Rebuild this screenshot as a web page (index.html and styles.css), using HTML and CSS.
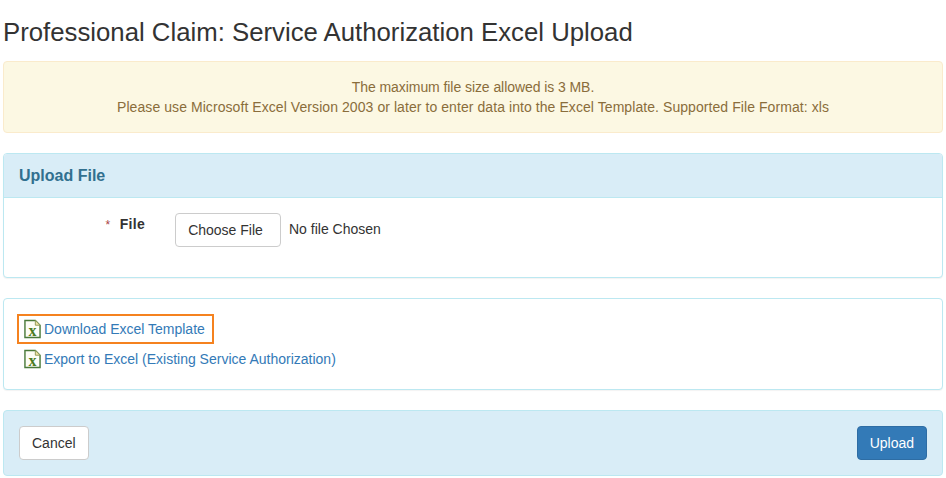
FILE: index.html
```html
<!DOCTYPE html>
<html lang="en">
<head>
  <meta charset="UTF-8">
  <title>Service Authorization Excel Upload</title>
  <link rel="stylesheet" href="styles.css">
</head>
<body>
  <h1 class="page-title">Professional Claim: Service Authorization Excel Upload</h1>

  <!-- File limits notice -->
  <div class="alert">
    <p>The maximum file size allowed is 3 MB.</p>
    <p>Please use Microsoft Excel Version 2003 or later to enter data into the Excel Template. Supported File Format: xls</p>
  </div>

  <!-- Upload form -->
  <div class="panel">
    <div class="panel-heading">Upload File</div>
    <div class="upload-row">
      <label class="field-label"><span class="required">*</span> File</label>
      <button type="button" class="btn choose-btn">Choose File</button>
      <span class="file-name">No file Chosen</span>
    </div>
  </div>

  <!-- Template links -->
  <div class="panel links-panel">
    <a href="#" class="excel-link highlighted">
      <svg class="excel-icon" viewBox="0 0 18 20">
        <path d="M1 1H12L17 6V19H1Z" fill="#fdfdf6" stroke="#4a7a3a" stroke-width="1.5"/>
        <path d="M12 1V6H17Z" fill="#f3e6a8" stroke="#8f9a5a" stroke-width="1"/>
        <text x="9" y="17" text-anchor="middle" class="icon-x">x</text>
      </svg>Download Excel Template
    </a>
    <a href="#" class="excel-link">
      <svg class="excel-icon" viewBox="0 0 18 20">
        <path d="M1 1H12L17 6V19H1Z" fill="#fdfdf6" stroke="#4a7a3a" stroke-width="1.5"/>
        <path d="M12 1V6H17Z" fill="#f3e6a8" stroke="#8f9a5a" stroke-width="1"/>
        <text x="9" y="17" text-anchor="middle" class="icon-x">x</text>
      </svg>Export to Excel (Existing Service Authorization)
    </a>
  </div>

  <!-- Form actions -->
  <div class="actions">
    <button type="button" class="btn">Cancel</button>
    <button type="button" class="btn btn-primary">Upload</button>
  </div>
</body>
</html>
```

FILE: styles.css
```css
/* Page base */
body {
  margin: 0;
  padding: 0 3px;
  font-family: "Liberation Sans", Arial, sans-serif;
  font-size: 14px;
  line-height: 20px;
  color: #333;
  background-color: #fff;
}

.page-title {
  margin: 0;
  padding: 18px 0 15px;
  font-size: 25.75px;
  font-weight: 400;
  line-height: 28px;
}

/* Yellow notice */
.alert {
  box-sizing: border-box;
  height: 72px;
  margin-bottom: 20px;
  padding: 15px;
  background-color: #fcf8e3;
  border: 1px solid #faebcc;
  border-radius: 4px;
  color: #8a6d3b;
  text-align: center;
}

.alert p {
  margin: 0;
  letter-spacing: -0.07px;
}

.alert p + p {
  letter-spacing: 0.07px;
}

/* Panels */
.panel {
  box-sizing: border-box;
  margin-bottom: 20px;
  background-color: #fff;
  border: 1px solid #bce8f1;
  border-radius: 4px;
  box-shadow: 0 1px 1px rgba(0, 0, 0, 0.05);
}

.panel-heading {
  height: 43px;
  padding: 0 15px;
  background-color: #d9edf7;
  border-bottom: 1px solid #bce8f1;
  border-radius: 3px 3px 0 0;
  color: #31708f;
  font-size: 16px;
  font-weight: 700;
  line-height: 43px;
}

.upload-row {
  box-sizing: border-box;
  display: flex;
  align-items: flex-start;
  height: 79px;
  padding: 15px 15px 0;
}

.field-label {
  box-sizing: border-box;
  width: 156px;
  margin-top: 1px;
  padding-right: 30px;
  font-weight: 700;
  letter-spacing: 0.3px;
  text-align: right;
}

.required {
  margin-right: 5px;
  color: #a94442;
  font-weight: 400;
  font-size: 12px;
}

.file-name {
  margin: 6px 0 0 8px;
}

/* Buttons */
.btn {
  height: 34px;
  padding: 6px 12px;
  background-color: #fff;
  border: 1px solid #ccc;
  border-radius: 4px;
  color: #333;
  font-family: inherit;
  font-size: 14px;
  line-height: 20px;
  cursor: pointer;
}

.choose-btn {
  width: 106px;
  padding: 6px 17px 6px 12px;
  white-space: nowrap;
}

.btn-primary {
  background-color: #337ab7;
  border-color: #2e6da4;
  color: #fff;
}

/* Link rows */
.links-panel {
  display: flex;
  flex-direction: column;
  align-items: flex-start;
  height: 92px;
  padding: 15px 13px;
}

.excel-link {
  box-sizing: border-box;
  display: flex;
  align-items: center;
  height: 30px;
  padding: 0 7px 0 5px;
  border: 2px solid transparent;
  color: #337ab7;
  text-decoration: none;
}

.highlighted {
  border-color: #f5821f;
}

.excel-icon {
  width: 17px;
  height: 20px;
  margin-right: 3px;
}

.icon-x {
  fill: #4a7a20;
  font-family: "Liberation Serif", serif;
  font-size: 17px;
  font-weight: 700;
}

/* Bottom bar */
.actions {
  box-sizing: border-box;
  display: flex;
  justify-content: space-between;
  align-items: center;
  height: 66px;
  padding: 0 15px;
  background-color: #d9edf7;
  border: 1px solid #bce8f1;
  border-radius: 4px;
}
```
